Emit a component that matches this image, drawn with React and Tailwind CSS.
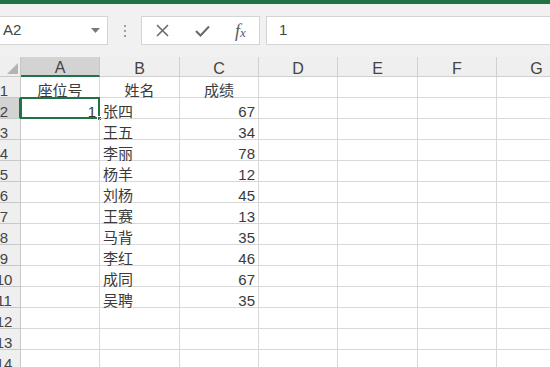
import React from "react";

const COLS = [
  { label: "A", w: 79 },
  { label: "B", w: 80 },
  { label: "C", w: 79 },
  { label: "D", w: 79 },
  { label: "E", w: 80 },
  { label: "F", w: 79 },
  { label: "G", w: 80 },
];

const DATA = [
  ["座位号", "姓名", "成绩"],
  ["1", "张四", "67"],
  ["", "王五", "34"],
  ["", "李丽", "78"],
  ["", "杨羊", "12"],
  ["", "刘杨", "45"],
  ["", "王赛", "13"],
  ["", "马背", "35"],
  ["", "李红", "46"],
  ["", "成同", "67"],
  ["", "吴聘", "35"],
  ["", "", ""],
  ["", "", ""],
  ["", "", ""],
];

function Toolbar() {
  return (
    <div className="h-[53px] bg-[#f1f1f1] flex items-start pt-[12px]">
      {/* Name box */}
      <div className="w-[108px] h-[29px] bg-white border border-[#d4d4d4] border-l-0 flex items-center justify-between pl-[3px] pr-[7px]">
        <span className="text-[15px] text-[#444]">A2</span>
        <svg width="9" height="5" viewBox="0 0 9 5">
          <path d="M0 0 H9 L4.5 5 Z" fill="#7a7a7a" />
        </svg>
      </div>

      {/* Divider dots */}
      <div className="w-[33px] h-[29px] flex flex-col items-center justify-center gap-[3px]">
        <span className="w-[2px] h-[2px] bg-[#a0a0a0]" />
        <span className="w-[2px] h-[2px] bg-[#a0a0a0]" />
        <span className="w-[2px] h-[2px] bg-[#a0a0a0]" />
      </div>

      {/* Cancel / Enter / fx */}
      <div className="w-[119px] h-[29px] bg-white border border-[#d4d4d4] flex items-center">
        <div className="w-[40px] flex justify-center">
          <svg width="13" height="13" viewBox="0 0 13 13">
            <path d="M1 1 L12 12 M12 1 L1 12" stroke="#6a6a6a" strokeWidth="1.6" />
          </svg>
        </div>
        <div className="w-[40px] flex justify-center">
          <svg width="15" height="12" viewBox="0 0 15 12">
            <path d="M1 6 L5.5 10.5 L14 1.5" stroke="#6a6a6a" strokeWidth="2" fill="none" />
          </svg>
        </div>
        <div className="w-[37px] flex justify-center">
          <span className="italic text-[18px] text-[#5a5a5a] font-['Liberation_Serif',serif] leading-none">
            f<span className="text-[13px]">x</span>
          </span>
        </div>
      </div>

      {/* Formula input */}
      <div className="flex-1 ml-[6px] h-[29px] bg-white border border-[#d4d4d4] border-r-0 flex items-center pl-[12px]">
        <span className="text-[15px] text-[#444]">1</span>
      </div>
    </div>
  );
}

function HeaderRow() {
  return (
    <div className="flex h-[20px] bg-[#efefef]">
      <div className="w-[21px] shrink-0 h-full border-r border-b border-[#c8c8c8] relative">
        <svg className="absolute right-[2px] bottom-[2px]" width="11" height="11" viewBox="0 0 11 11">
          <path d="M11 0 V11 H0 Z" fill="#b4b4b4" />
        </svg>
      </div>
      {COLS.map((c, i) => (
        <div
          key={c.label}
          style={{ width: c.w }}
          className={
            i === 0
              ? "shrink-0 h-full bg-[#d3d3d3] border-r border-[#c8c8c8] border-b-2 border-b-[#217346] flex items-end justify-center leading-[14px] text-[16px] text-[#444]"
              : "shrink-0 h-full border-r border-b border-[#d0d0d0] flex items-end justify-center leading-[14px] text-[16px] text-[#444]"
          }
        >
          {c.label}
        </div>
      ))}
    </div>
  );
}

function Row({ idx, vals }) {
  const num = idx + 1;
  const sel = num === 2;
  return (
    <div className="flex h-[21px]">
      <div
        className={
          sel
            ? "w-[21px] shrink-0 h-full bg-[#d3d3d3] border-b border-[#c8c8c8] border-r-2 border-r-[#217346] flex items-end leading-[13px] text-[15px] text-[#444]"
            : "w-[21px] shrink-0 h-full bg-[#efefef] border-b border-r border-[#c8c8c8] flex items-end leading-[13px] text-[15px] text-[#444]"
        }
      >
        {/* row header is cropped on the left in the screenshot */}
        <div className="w-[30px] shrink-0 -ml-[11px] text-center whitespace-nowrap">{num}</div>
      </div>
      {COLS.map((c, i) => {
        const v = vals[i] || "";
        let align = "justify-start pl-[3px]";
        if (idx === 0) align = "justify-center";
        else if (i === 0 || i === 2) align = "justify-end pr-[3px]";
        return (
          <div
            key={c.label}
            style={{ width: c.w }}
            className={`shrink-0 h-full border-r border-b border-[#d9d9d9] flex items-end leading-[13px] text-[15px] text-[#3a3a3a] relative ${align}`}
          >
            {v}
            {sel && i === 0 && (
              <>
                <div className="absolute -left-[1px] -top-[1px] -right-[1px] -bottom-[1px] border-2 border-[#217346]" />
                <div className="absolute -right-[3px] -bottom-[3px] w-[5px] h-[5px] bg-[#217346] border border-white" />
              </>
            )}
          </div>
        );
      })}
    </div>
  );
}

export default function App() {
  return (
    <div className="w-[550px] h-[367px] overflow-hidden bg-white font-['Liberation_Sans','Noto_Sans_CJK_SC',sans-serif]">
      <div className="h-[4px] bg-[#217346]" />
      <Toolbar />
      <HeaderRow />
      {DATA.map((vals, idx) => (
        <Row key={idx} idx={idx} vals={vals} />
      ))}
    </div>
  );
}
